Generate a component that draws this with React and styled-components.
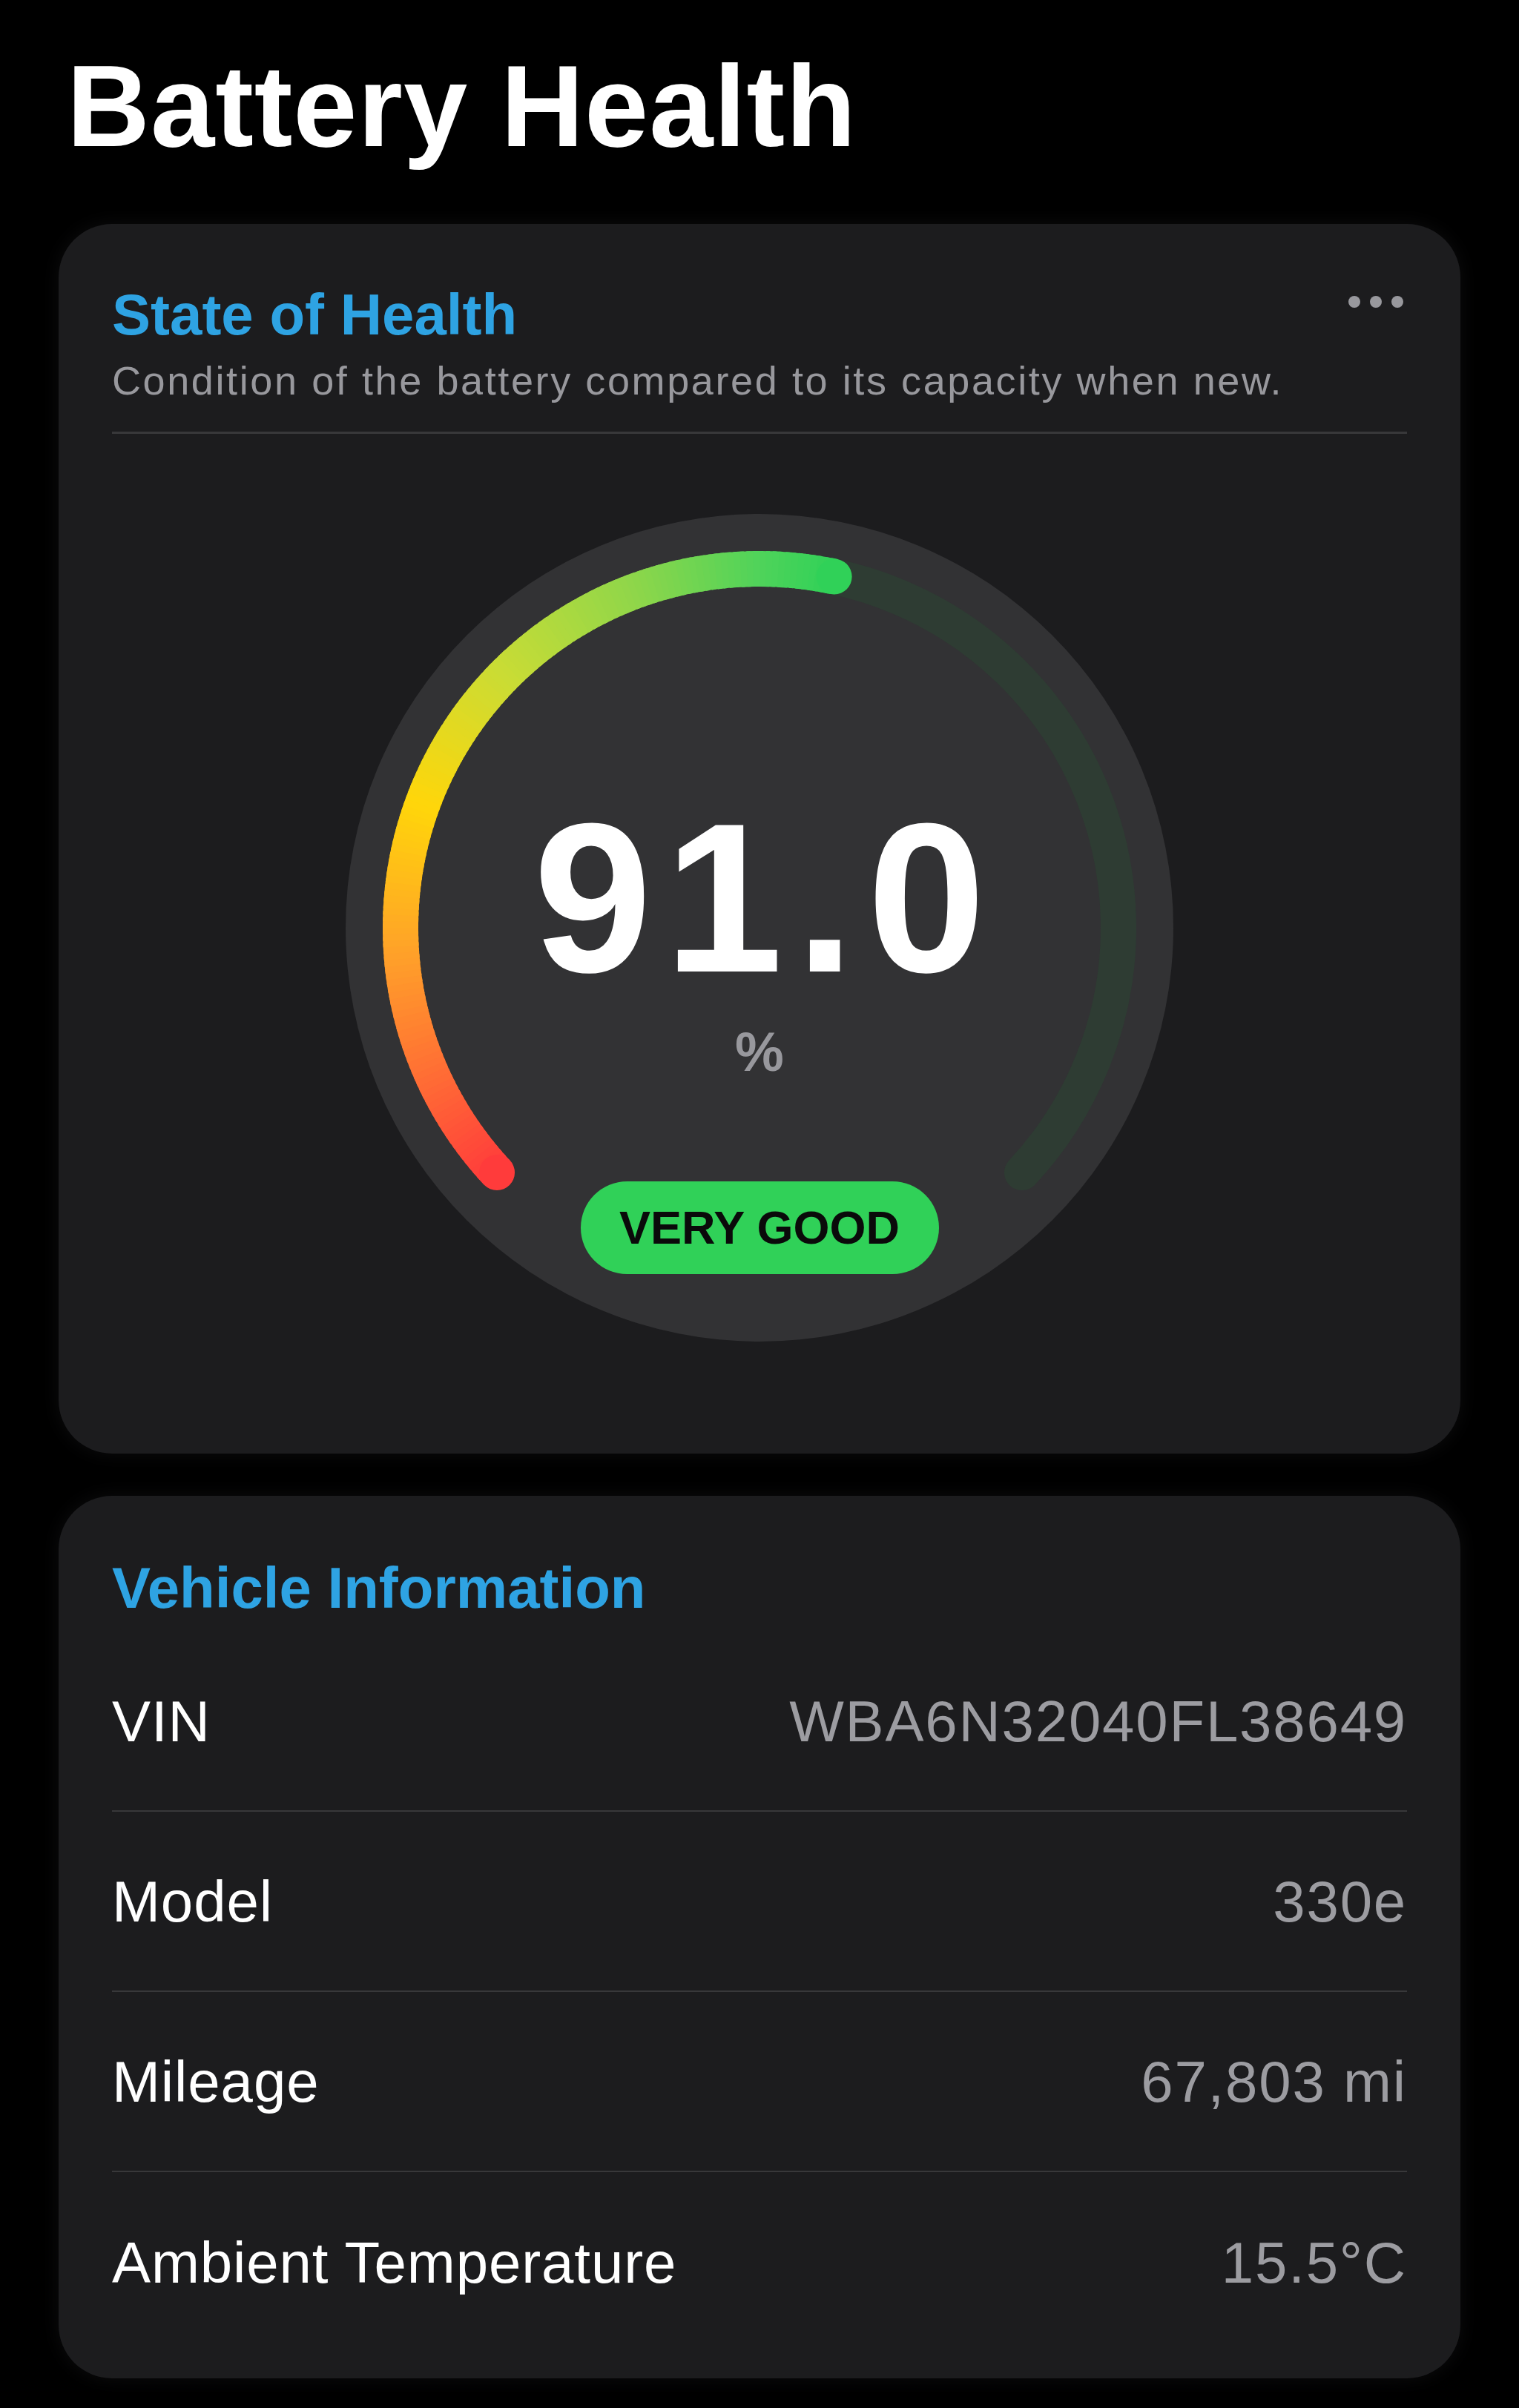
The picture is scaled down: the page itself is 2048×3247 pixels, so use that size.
import React from 'react'
import styled, { createGlobalStyle } from 'styled-components'

const GlobalStyle = createGlobalStyle`
    html, body {
        margin: 0;
        padding: 0;
        background: #000;
    }
    body {
        font-family: "Liberation Sans", Arial, sans-serif;
        color: #fff;
        -webkit-font-smoothing: antialiased;
    }
`

const Page = styled.div`
    box-sizing: border-box;
    width: 2048px;
    min-height: 3247px;
    padding: 51px 79px 40px;
    background: #000;
`
const PageTitle = styled.h1`
    margin: 0 0 65px 11px;
    font-size: 155px;
    line-height: 186px;
    font-weight: 700;
    letter-spacing: 1px;
    color: #fff;
`
const Card = styled.section`
    box-sizing: border-box;
    background: #1c1c1e;
    border-radius: 72px;
    padding: ${p => p.$pad};
    box-shadow: 0 0 26px rgba(28, 28, 30, 0.45);
    & + & {
        margin-top: 57px;
    }
`
const CardHeader = styled.div`
    display: flex;
    justify-content: space-between;
    align-items: flex-start;
`
const CardTitle = styled.h2`
    margin: 0;
    font-size: 78px;
    line-height: 94px;
    font-weight: 700;
    color: #2ea3e3;
`
const CardSubtitle = styled.p`
    margin: 10px 0 0;
    font-size: 54px;
    line-height: 65px;
    letter-spacing: 2.6px;
    color: #98989d;
`
const MoreButton = styled.div`
    display: flex;
    gap: 13px;
    padding: 22px 5px 0 0;
`
const Dot = styled.span`
    width: 16px;
    height: 16px;
    border-radius: 50%;
    background: #98989d;
`
const Divider = styled.div`
    height: 3px;
    margin-top: 36px;
    background: #38383a;
`

const Gauge = styled.div`
    position: relative;
    box-sizing: border-box;
    width: 1116px;
    height: 1116px;
    margin: 108px auto 0;
    padding-top: 374px;
    border-radius: 50%;
    background: #323234;
    display: flex;
    flex-direction: column;
    align-items: center;
`
const GaugeArc = styled.svg`
    position: absolute;
    left: 0;
    top: 0;
`
const GaugeValue = styled.div`
    position: relative;
    font-size: 287px;
    line-height: 287px;
    font-weight: 700;
    letter-spacing: 17px;
    margin-right: -17px;
    color: #fff;
`
const GaugeUnit = styled.div`
    position: relative;
    margin-top: 28px;
    font-size: 74px;
    line-height: 74px;
    font-weight: 700;
    color: #98989d;
`
const Badge = styled.div`
    position: relative;
    margin-top: 137px;
    width: 483px;
    height: 125px;
    border-radius: 63px;
    background: #30d158;
    display: flex;
    align-items: center;
    justify-content: center;
    font-size: 63px;
    line-height: 1;
    font-weight: 700;
    color: #0a0a0a;
`

const InfoList = styled.div`
    margin-top: 12px;
`
const InfoRow = styled.div`
    box-sizing: border-box;
    height: 243px;
    display: flex;
    align-items: center;
    justify-content: space-between;
    border-bottom: 2px solid #38383a;
    &:last-child {
        border-bottom: none;
    }
`
const InfoLabel = styled.span`
    font-size: 78px;
    line-height: 1;
    letter-spacing: 0.9px;
    color: #fff;
`
const InfoValue = styled.span`
    font-size: 78px;
    line-height: 1;
    letter-spacing: 1.8px;
    color: #9c9ca1;
`

// gauge geometry
const CX = 558
const R = 484
const START = -133
const END = 133
const PROGRESS = 12

const stops = [
    [-133, [255, 59, 59]],
    [-115, [255, 107, 53]],
    [-95, [255, 159, 42]],
    [-70, [255, 214, 10]],
    [-45, [201, 220, 53]],
    [-20, [142, 214, 74]],
    [0, [79, 211, 90]],
    [12, [48, 209, 88]],
]

const colorAt = deg => {
    for (let i = 0; i < stops.length - 1; i++) {
        const [a0, c0] = stops[i]
        const [a1, c1] = stops[i + 1]
        if (deg <= a1) {
            const t = Math.max(0, (deg - a0) / (a1 - a0))
            const c = c0.map((v, k) => Math.round(v + (c1[k] - v) * t))
            return `rgb(${c.join(',')})`
        }
    }
    return `rgb(${stops[stops.length - 1][1].join(',')})`
}

const pt = deg => {
    const a = (deg * Math.PI) / 180
    return [CX + R * Math.sin(a), CX - R * Math.cos(a)]
}

const arcPath = (a0, a1) => {
    const [x0, y0] = pt(a0)
    const [x1, y1] = pt(a1)
    const large = a1 - a0 > 180 ? 1 : 0
    return `M ${x0} ${y0} A ${R} ${R} 0 ${large} 1 ${x1} ${y1}`
}

const segments = []
for (let a = START; a < PROGRESS; a += 1) {
    segments.push({ a0: a, a1: Math.min(a + 1.6, PROGRESS), color: colorAt(a + 0.5) })
}

const vehicle = [
    { label: 'VIN', value: 'WBA6N32040FL38649' },
    { label: 'Model', value: '330e' },
    { label: 'Mileage', value: '67,803 mi' },
    { label: 'Ambient Temperature', value: '15.5°C' },
]

const HealthGauge = () => {
    const [sx, sy] = pt(START)
    const [ex, ey] = pt(PROGRESS)
    return (
        <Gauge>
            <GaugeArc width="1116" height="1116" viewBox="0 0 1116 1116">
                <path d={arcPath(START, END)} fill="none" stroke="#2e3c33" strokeWidth="48" strokeLinecap="round" />
                {segments.map(s => (
                    <path key={s.a0} d={arcPath(s.a0, s.a1)} fill="none" stroke={s.color} strokeWidth="48" />
                ))}
                <circle cx={sx} cy={sy} r="24" fill={colorAt(START)} />
                <circle cx={ex} cy={ey} r="24" fill={colorAt(PROGRESS)} />
            </GaugeArc>
            <GaugeValue>91.0</GaugeValue>
            <GaugeUnit>%</GaugeUnit>
            <Badge>VERY GOOD</Badge>
        </Gauge>
    )
}

const App = () => {
    return (
        <Page>
            <GlobalStyle />
            <PageTitle>Battery Health</PageTitle>

            <Card $pad="75px 72px 151px">
                <CardHeader>
                    <div>
                        <CardTitle>State of Health</CardTitle>
                        <CardSubtitle>Condition of the battery compared to its capacity when new.</CardSubtitle>
                    </div>
                    <MoreButton>
                        <Dot />
                        <Dot />
                        <Dot />
                    </MoreButton>
                </CardHeader>
                <Divider />
                <HealthGauge />
            </Card>

            <Card $pad="77px 72px 35px">
                <CardTitle>Vehicle Information</CardTitle>
                <InfoList>
                    {vehicle.map(item => (
                        <InfoRow key={item.label}>
                            <InfoLabel>{item.label}</InfoLabel>
                            <InfoValue>{item.value}</InfoValue>
                        </InfoRow>
                    ))}
                </InfoList>
            </Card>
        </Page>
    )
}

export default App
